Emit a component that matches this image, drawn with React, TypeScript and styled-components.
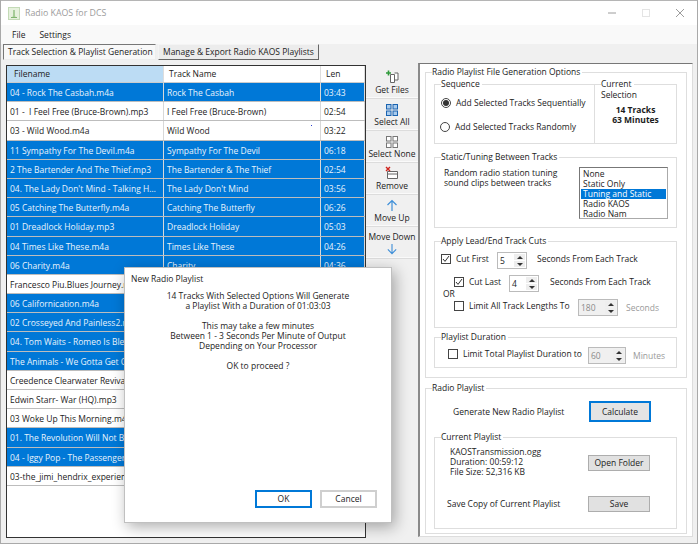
import React from 'react'
import styled, { createGlobalStyle } from 'styled-components'

const GlobalStyle = createGlobalStyle`
	html, body {
		margin: 0;
		padding: 0;
		background: #a9a9a9;
	}
	* {
		box-sizing: border-box;
	}
`

const Window = styled.div`
	position: relative;
	width: 696px;
	height: 543px;
	margin-left: 1px;
	overflow: hidden;
	background: #f0f0f0;
	color: #1c1c1c;
	font-family: 'Open Sans', 'Liberation Sans', sans-serif;
	font-size: 8.5px;
	line-height: 10px;
`

const TitleBar = styled.div`
	display: flex;
	align-items: center;
	height: 25px;
	padding-left: 7px;
	background: #fff;
	color: #9c9c9c;
	font-size: 8.8px;
	border-top: 1px solid #b5b5b5;
`

const TitleText = styled.span`
	margin-left: 5px;
	flex: 1;
`

const WindowControls = styled.div`
	display: flex;
	align-items: center;
	gap: 24px;
	padding-right: 12px;
`

const MenuBar = styled.div`
	display: flex;
	align-items: center;
	gap: 14px;
	height: 19px;
	padding-left: 11px;
	background: #f9f9f9;
`

const TabRow = styled.div`
	display: flex;
	gap: 2px;
	height: 19px;
	padding: 0 0 3px 2px;
`

const Tab = styled.div<{ $active?: boolean }>`
	display: flex;
	align-items: center;
	padding: 0 4px;
	width: ${props => props.$active ? 153 : 161}px;
	white-space: nowrap;
	background: ${props => props.$active ? '#f8f8f8' : '#ececec'};
	border: 1px solid;
	border-color: ${props => props.$active ? '#777 #eee #eee #777' : '#f4f4f4 #666 #666 #f4f4f4'};
`

const Content = styled.div`
	display: flex;
	padding-left: 5px;
`

const Table = styled.div`
	width: 360px;
	height: 473px;
	margin-top: 2px;
	background: #fff;
	border: 1px solid #333;
`

const HeaderRow = styled.div`
	display: grid;
	grid-template-columns: 157px 157px 1fr;
	height: 17px;
	border-bottom: 1px solid #ccc;
`

const HeaderCell = styled.div<{ $active?: boolean }>`
	display: flex;
	align-items: center;
	padding-left: ${props => props.$active ? 7 : 5}px;
	background: ${props => props.$active ? '#bcdcf4' : '#fff'};
	border-right: 1px solid #ddd;
`

const Row = styled.div<{ $selected: boolean }>`
	display: grid;
	grid-template-columns: 157px 157px 1fr;
	height: 19.2px;
	border-bottom: 1px solid #bdbdbd;
	background: ${props => props.$selected ? '#0078d7' : '#fff'};
	color: ${props => props.$selected ? '#e8f3fc' : '#1c1c1c'};
`

const Cell = styled.div`
	position: relative;
	padding: 0 5px 0 3px;
	line-height: 19.5px;
	overflow: hidden;
	white-space: nowrap;
	text-overflow: ellipsis;
	border-right: 1px solid #d8d8d8;
`

const Dot = styled.span`
	position: absolute;
	right: 8px;
	top: 4px;
	width: 1px;
	height: 1px;
	background: #2a3fd0;
`

const Toolbar = styled.div`
	display: flex;
	flex-direction: column;
	width: 52px;
	margin-top: 4px;
`

const ToolButton = styled.div`
	display: flex;
	flex-direction: column;
	align-items: center;
	justify-content: flex-end;
	gap: 1px;
	height: 32px;
	padding-bottom: 3px;
	white-space: nowrap;
	border-bottom: 1px solid #dcdcdc;
	box-shadow: inset 0 -1px 0 #fafafa;
`

const DownButton = styled(ToolButton)`
	justify-content: flex-start;
	padding-top: 5px;
`

const Panel = styled.div`
	width: 275px;
	height: 474px;
	padding: 2px 0 0 6px;
	background: #fff;
	border-top: 1px solid #777;
	border-left: 2px solid #8a8a8a;
	border-right: 1px solid #ddd;
	border-bottom: 1px solid #ddd;
`

const Group = styled.fieldset<{ $height?: number; $top?: number }>`
	margin: ${props => props.$top || 0}px 0 0 0;
	padding: 0;
	min-width: 0;
	height: ${props => props.$height ? props.$height + 'px' : 'auto'};
	border: 1px solid #dedede;
`

const Legend = styled.legend`
	margin-left: 6px;
	padding: 0 2px 0 0;
	line-height: 12px;
`

const OuterLegend = styled(Legend)`
	margin-left: -2px;
`

const OuterGroup = styled(Group)`
	width: 262px;
	margin-left: -1px;
	padding: 0 9px 9px 8px;
`

const RadioGroup = styled(Group)`
	width: 262px;
	margin-left: -1px;
	padding: 0 9px 0 8px;
`

const SequenceRow = styled.div`
	display: flex;
`

const SequenceGroup = styled(Group)`
	width: 160px;
	border-right: none;
`

const SelectionGroup = styled(Group)`
	width: 83px;
`

const SelectionLabel = styled.div`
	margin-left: 6px;
`

const SelectionCount = styled.div`
	margin-top: 5px;
	text-align: center;
	font-weight: 700;
`

const OptionRow = styled.div<{ $left: number; $top: number }>`
	display: flex;
	align-items: center;
	margin: ${props => props.$top}px 0 0 ${props => props.$left}px;
	white-space: nowrap;
`

const Radio = styled.span<{ $checked?: boolean }>`
	flex: none;
	display: flex;
	align-items: center;
	justify-content: center;
	width: 10px;
	height: 10px;
	margin-right: 5px;
	background: #fff;
	border: 1px solid #444;
	border-radius: 50%;
	&::after {
		content: '';
		width: 6px;
		height: 6px;
		border-radius: 50%;
		background: ${props => props.$checked ? '#333' : 'transparent'};
	}
`

const StaticBody = styled.div`
	display: flex;
	justify-content: space-between;
	padding: 5px 8px 0 9px;
`

const StaticText = styled.div`
	width: 125px;
`

const ListBox = styled.div`
	width: 89px;
	height: 52px;
	margin-top: -1px;
	padding: 1px 1px 0;
	border: 1px solid #777;
	border-right-color: #aaa;
	border-bottom-color: #aaa;
`

const ListItem = styled.div<{ $selected?: boolean }>`
	height: 10px;
	padding-left: 2px;
	background: ${props => props.$selected ? '#0078d7' : 'transparent'};
	color: ${props => props.$selected ? '#fff' : '#1c1c1c'};
`

const CheckWrap = styled.span`
	flex: none;
	display: inline-flex;
	align-items: center;
	justify-content: center;
	width: 10px;
	height: 10px;
	margin-right: 5px;
	background: #fff;
	border: 1px solid #444;
`

const OptionLabel = styled.span<{ $width: number }>`
	width: ${props => props.$width}px;
`

const SpinnerBox = styled.div<{ $width: number; $disabled?: boolean }>`
	flex: none;
	display: flex;
	width: ${props => props.$width}px;
	height: 17px;
	margin-top: 3px;
	background: ${props => props.$disabled ? '#f0f0f0' : '#fff'};
	color: ${props => props.$disabled ? '#8a8a8a' : '#1c1c1c'};
	border: 1px solid #bbb;
`

const SpinnerValue = styled.div`
	flex: 1;
	display: flex;
	align-items: center;
	padding-left: 2px;
`

const SpinnerArrows = styled.div`
	display: flex;
	flex-direction: column;
	width: 11px;
	margin: 1px;
	gap: 1px;
`

const SpinnerArrow = styled.div<{ $down?: boolean }>`
	flex: 1;
	display: flex;
	align-items: center;
	justify-content: center;
	background: #eee;
	&::after {
		content: '';
		border-left: 3px solid transparent;
		border-right: 3px solid transparent;
		${props => props.$down ? 'border-top: 3px solid #333;' : 'border-bottom: 3px solid #333;'}
	}
`

const UnitLabel = styled.span<{ $left: number; $muted?: boolean }>`
	margin: ${props => props.$muted ? 3 : 0}px 0 0 ${props => props.$left}px;
	color: ${props => props.$muted ? '#9a9a9a' : 'inherit'};
`

const OrLabel = styled.div`
	margin: -3px 0 -3px 8px;
`

const PushButton = styled.div<{ $focused?: boolean; $height: number }>`
	display: flex;
	align-items: center;
	justify-content: center;
	width: 62px;
	height: ${props => props.$height}px;
	background: ${props => props.$focused ? '#e4e4e4' : '#e1e1e1'};
	border: ${props => props.$focused ? '2px solid #0078d7' : '1px solid #adadad'};
`

const FolderButton = styled(PushButton)`
	margin-top: 2px;
`

const ActionRow = styled.div<{ $top: number; $left: number }>`
	display: flex;
	align-items: center;
	margin-top: ${props => props.$top}px;
	padding-left: ${props => props.$left}px;
`

const ActionLabel = styled.span<{ $width: number }>`
	width: ${props => props.$width}px;
	white-space: nowrap;
`

const Dialog = styled.div`
	position: absolute;
	left: 123px;
	top: 267px;
	width: 268px;
	height: 256px;
	padding: 6px;
	background: #fff;
	border: 1px solid #c0c0c0;
	box-shadow: 3px 4px 14px rgba(0, 0, 0, 0.32);
	display: flex;
	flex-direction: column;
`

const DialogMessage = styled.div`
	flex: 1;
	margin-top: 7px;
	text-align: center;
`

const DialogLine = styled.div`
	min-height: 10px;
`

const DialogActions = styled.div`
	display: flex;
	justify-content: flex-end;
	gap: 8px;
	padding: 0 8px 8px 0;
`

const DialogButton = styled.div<{ $primary?: boolean }>`
	display: flex;
	align-items: center;
	justify-content: center;
	width: 57px;
	height: 18px;
	border: 2px solid ${props => props.$primary ? '#0078d7' : '#cfcfcf'};
`

const tracks: [string, string, string, boolean][] = [
	['04 - Rock The Casbah.m4a', 'Rock The Casbah', '03:43', true],
	['01 - \u00a0I Feel Free (Bruce-Brown).mp3', 'I Feel Free (Bruce-Brown)', '02:54', false],
	['03 - Wild Wood.m4a', 'Wild Wood', '03:22', false],
	['11 Sympathy For The Devil.m4a', 'Sympathy For The Devil', '06:18', true],
	['2 The Bartender And The Thief.mp3', 'The Bartender & The Thief', '02:54', true],
	['04. The Lady Don\'t Mind - Talking Heads.m4a', 'The Lady Don\'t Mind', '03:56', true],
	['05 Catching The Butterfly.m4a', 'Catching The Butterfly', '06:26', true],
	['01 Dreadlock Holiday.mp3', 'Dreadlock Holiday', '05:03', true],
	['04 Times Like These.m4a', 'Times Like These', '04:26', true],
	['06 Charity.m4a', 'Charity', '04:36', true],
	['Francesco Piu.Blues Journey.mp3', '', '', false],
	['06 Californication.m4a', '', '', true],
	['02 Crosseyed And Painless2.m4a', '', '', true],
	['04. Tom Waits - Romeo Is Bleeding.m4a', '', '', true],
	['The Animals - We Gotta Get Out.m4a', '', '', true],
	['Creedence Clearwater Revival.mp3', '', '', false],
	['Edwin Starr- War (HQ).mp3', '', '', false],
	['03 Woke Up This Morning.m4a', '', '', false],
	['01. The Revolution Will Not Be.m4a', '', '', true],
	['04 - Iggy Pop - The Passenger.m4a', '', '', true],
	['03-the_jimi_hendrix_experience.mp3', '', '', false]
]

const Check: React.FC<{ checked?: boolean }> = ({ checked }) => (
	<CheckWrap>
		{checked && (
			<svg width='8' height='8' viewBox='0 0 8 8'>
				<path d='M1 4l2 2.4L7 1' fill='none' stroke='#333' strokeWidth='1' />
			</svg>
		)}
	</CheckWrap>
)

const Spinner: React.FC<{ value: number; width: number; disabled?: boolean }> = ({ value, width, disabled }) => (
	<SpinnerBox $width={width} $disabled={disabled}>
		<SpinnerValue>{value}</SpinnerValue>
		<SpinnerArrows>
			<SpinnerArrow />
			<SpinnerArrow $down />
		</SpinnerArrows>
	</SpinnerBox>
)

const AppIcon = () => (
	<svg width='12' height='13' viewBox='0 0 12 13'>
		<rect x='0.5' y='0.5' width='11' height='12' fill='#e6f1dd' stroke='#c3dab6' />
		<path d='M6 3v7M3 10.5h6' fill='none' stroke='#7fb56e' strokeWidth='1.2' />
		<path d='M4.5 10L6 5l1.5 5z' fill='#a5cc95' />
	</svg>
)

const GetFilesIcon = () => (
	<svg width='14' height='14' viewBox='0 0 14 14'>
		<path d='M5.5 4.5h4v8h-4zM9.5 3h3.5v7H9.5' fill='#fff' stroke='#666' />
		<path d='M3.5 0.5v5M1 3h5' stroke='#2f9a3a' strokeWidth='1.6' />
	</svg>
)

const GridIcon: React.FC<{ color: string; fill: string }> = ({ color, fill }) => (
	<svg width='12' height='12' viewBox='0 0 12 12'>
		<rect x='0.5' y='0.5' width='4.5' height='4.5' fill={fill} stroke={color} />
		<rect x='7' y='0.5' width='4.5' height='4.5' fill={fill} stroke={color} />
		<rect x='0.5' y='7' width='4.5' height='4.5' fill={fill} stroke={color} />
		<rect x='7' y='7' width='4.5' height='4.5' fill={fill} stroke={color} />
	</svg>
)

const RemoveIcon = () => (
	<svg width='14' height='14' viewBox='0 0 14 14'>
		<path d='M2.5 5.5h10v7h-10zM2.5 8h10' fill='#fff' stroke='#666' />
		<path d='M1 1l4 4M5 1L1 5' stroke='#d0231c' strokeWidth='1.4' />
	</svg>
)

const ArrowUp = () => (
	<svg width='12' height='13' viewBox='0 0 12 13'>
		<path d='M6 12V1.5M1.5 6L6 1.5 10.5 6' fill='none' stroke='#3f8fd8' strokeWidth='1.2' />
	</svg>
)

const ArrowDown = () => (
	<svg width='12' height='13' viewBox='0 0 12 13'>
		<path d='M6 1v10.5M1.5 7L6 11.5 10.5 7' fill='none' stroke='#3f8fd8' strokeWidth='1.2' />
	</svg>
)

const App: React.FC = () => (
	<Window>
		<GlobalStyle />

		<TitleBar>
			<AppIcon />
			<TitleText>Radio KAOS for DCS</TitleText>
			<WindowControls>
				<svg width='10' height='10' viewBox='0 0 10 10'><path d='M1 5h8' stroke='#9c9c9c' /></svg>
				<svg width='10' height='10' viewBox='0 0 10 10'><rect x='1.5' y='1.5' width='7' height='7' fill='none' stroke='#e4e4e4' /></svg>
				<svg width='10' height='10' viewBox='0 0 10 10'><path d='M1 1l8 8M9 1L1 9' stroke='#9c9c9c' /></svg>
			</WindowControls>
		</TitleBar>

		<MenuBar>
			<span>File</span>
			<span>Settings</span>
		</MenuBar>

		<TabRow>
			<Tab $active>Track Selection &amp; Playlist Generation</Tab>
			<Tab>Manage &amp; Export Radio KAOS Playlists</Tab>
		</TabRow>

		<Content>
			<Table>
				<HeaderRow>
					<HeaderCell $active>Filename</HeaderCell>
					<HeaderCell>Track Name</HeaderCell>
					<HeaderCell>Len</HeaderCell>
				</HeaderRow>
				{tracks.map(([file, name, length, selected]) => (
					<Row key={file} $selected={selected}>
						<Cell>{file}</Cell>
						<Cell>
							{name}
							{name === 'Wild Wood' && <Dot />}
						</Cell>
						<Cell>{length}</Cell>
					</Row>
				))}
			</Table>

			<Toolbar>
				<ToolButton><GetFilesIcon />Get Files</ToolButton>
				<ToolButton><GridIcon color='#1a63b0' fill='#a9cbec' />Select All</ToolButton>
				<ToolButton><GridIcon color='#777' fill='#fff' />Select None</ToolButton>
				<ToolButton><RemoveIcon />Remove</ToolButton>
				<ToolButton><ArrowUp />Move Up</ToolButton>
				<DownButton>Move Down<ArrowDown /></DownButton>
			</Toolbar>

			<Panel>
				<OuterGroup>
					<OuterLegend>Radio Playlist File Generation Options</OuterLegend>

					<SequenceRow>
						<SequenceGroup $height={66}>
							<Legend>Sequence</Legend>
							<OptionRow $left={6} $top={8}>
								<Radio $checked />
								Add Selected Tracks Sequentially
							</OptionRow>
							<OptionRow $left={5} $top={14}>
								<Radio />
								Add Selected Tracks Randomly
							</OptionRow>
						</SequenceGroup>
						<SelectionGroup $height={66}>
							<Legend>Current</Legend>
							<SelectionLabel>Selection</SelectionLabel>
							<SelectionCount>14 Tracks<br />63 Minutes</SelectionCount>
						</SelectionGroup>
					</SequenceRow>

					<Group $height={77} $top={7}>
						<Legend>Static/Tuning Between Tracks</Legend>
						<StaticBody>
							<StaticText>Random radio station tuning sound clips between tracks</StaticText>
							<ListBox>
								<ListItem>None</ListItem>
								<ListItem>Static Only</ListItem>
								<ListItem $selected>Tuning and Static</ListItem>
								<ListItem>Radio KAOS</ListItem>
								<ListItem>Radio Nam</ListItem>
							</ListBox>
						</StaticBody>
					</Group>

					<Group $height={93} $top={7}>
						<Legend>Apply Lead/End Track Cuts</Legend>
						<OptionRow $left={6} $top={2}>
							<Check checked />
							<OptionLabel $width={41}>Cut First</OptionLabel>
							<Spinner value={5} width={30} />
							<UnitLabel $left={10}>Seconds From Each Track</UnitLabel>
						</OptionRow>
						<OptionRow $left={19} $top={3}>
							<Check checked />
							<OptionLabel $width={40}>Cut Last</OptionLabel>
							<Spinner value={4} width={30} />
							<UnitLabel $left={11}>Seconds From Each Track</UnitLabel>
						</OptionRow>
						<OrLabel>OR</OrLabel>
						<OptionRow $left={19} $top={0}>
							<Check />
							<OptionLabel $width={109}>Limit All Track Lengths To</OptionLabel>
							<Spinner value={180} width={40} disabled />
							<UnitLabel $left={8} $muted>Seconds</UnitLabel>
						</OptionRow>
					</Group>

					<Group $height={37} $top={3}>
						<Legend>Playlist Duration</Legend>
						<OptionRow $left={13} $top={1}>
							<Check />
							<OptionLabel $width={125}>Limit Total Playlist Duration to</OptionLabel>
							<Spinner value={60} width={38} disabled />
							<UnitLabel $left={7} $muted>Minutes</UnitLabel>
						</OptionRow>
					</Group>
				</OuterGroup>

				<RadioGroup $height={152} $top={4}>
					<OuterLegend>Radio Playlist</OuterLegend>
					<ActionRow $top={7} $left={19}>
						<ActionLabel $width={136}>Generate New Radio Playlist</ActionLabel>
						<PushButton $focused $height={21}>Calculate</PushButton>
					</ActionRow>

					<Group $height={98} $top={9}>
						<Legend>Current Playlist</Legend>
						<ActionRow $top={4} $left={15}>
							<ActionLabel $width={138}>
								KAOSTransmission.ogg<br />
								Duration: 00:59:12<br />
								File Size: 52,316 KB
							</ActionLabel>
							<FolderButton $height={16}>Open Folder</FolderButton>
						</ActionRow>
						<ActionRow $top={19} $left={12}>
							<ActionLabel $width={141}>Save Copy of Current Playlist</ActionLabel>
							<PushButton $height={16}>Save</PushButton>
						</ActionRow>
					</Group>
				</RadioGroup>
			</Panel>
		</Content>

		<Dialog>
			<div>New Radio Playlist</div>
			<DialogMessage>
				<DialogLine>14 Tracks With Selected Options Will Generate</DialogLine>
				<DialogLine>a Playlist With a Duration of 01:03:03</DialogLine>
				<DialogLine />
				<DialogLine>This may take a few minutes</DialogLine>
				<DialogLine>Between 1 - 3 Seconds Per Minute of Output</DialogLine>
				<DialogLine>Depending on Your Processor</DialogLine>
				<DialogLine />
				<DialogLine>OK to proceed ?</DialogLine>
			</DialogMessage>
			<DialogActions>
				<DialogButton $primary>OK</DialogButton>
				<DialogButton>Cancel</DialogButton>
			</DialogActions>
		</Dialog>
	</Window>
)

export default App
